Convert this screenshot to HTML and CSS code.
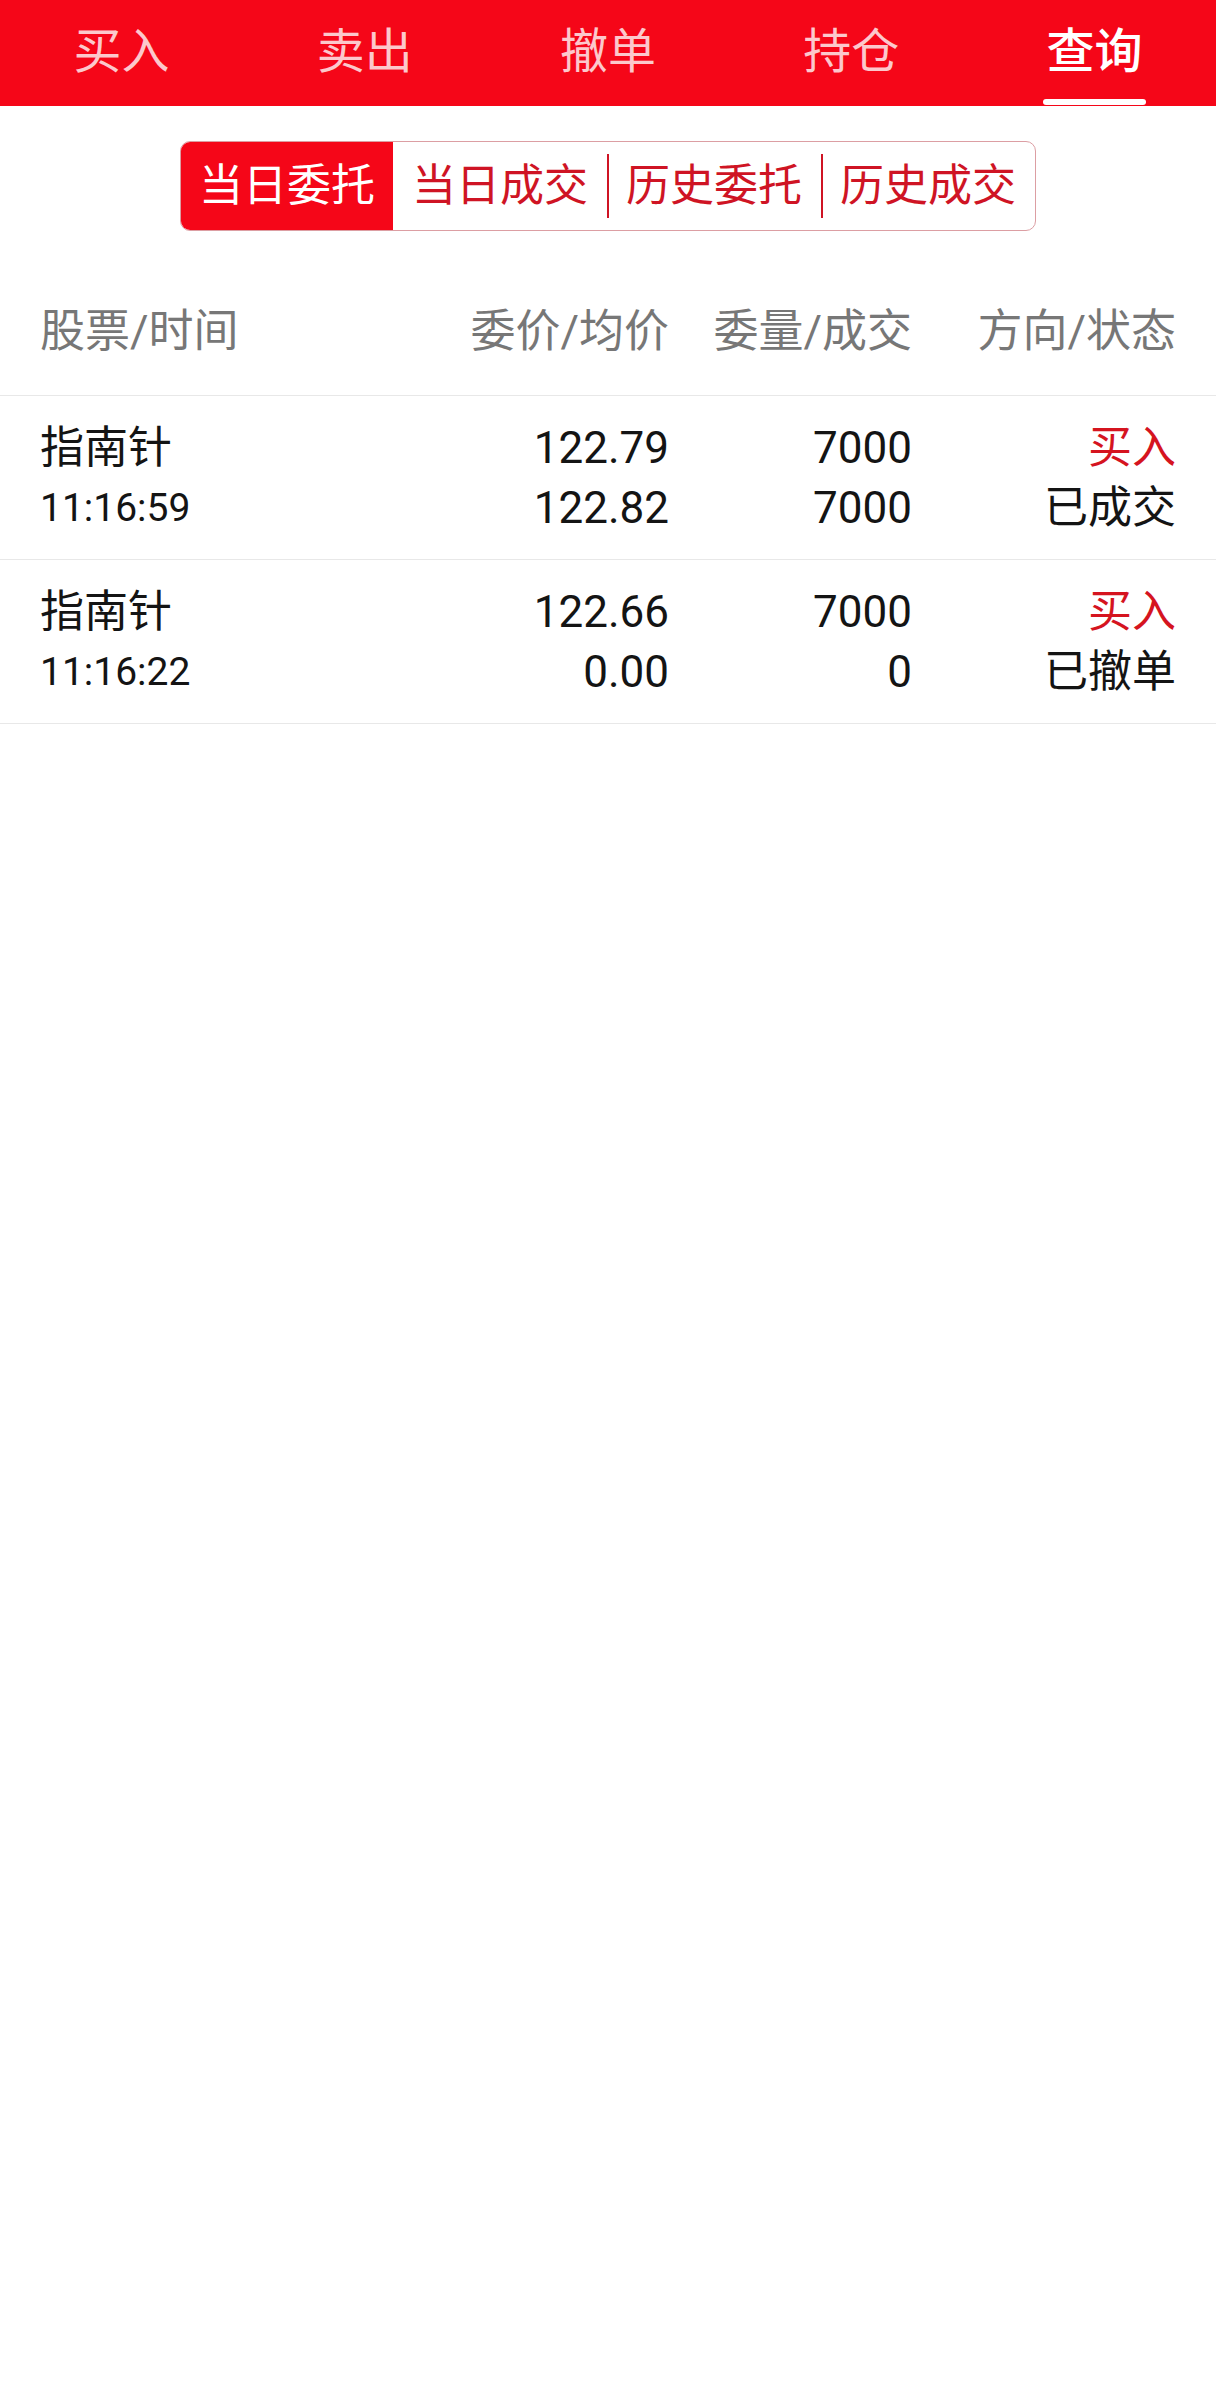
FILE: index.html
```html
<!DOCTYPE html>
<html>
<head>
    <title>查询 – 当日委托</title>
    <link rel="stylesheet" href="styles.css">
</head>
<body>
    <div class="tabbar">
        <div class="tab">买入</div>
        <div class="tab">卖出</div>
        <div class="tab">撤单</div>
        <div class="tab">持仓</div>
        <div class="tab active">查询</div>
    </div>

    <div class="segwrap">
        <div class="seg">
            <div class="seg-item on">当日委托</div>
            <div class="seg-item">当日成交</div>
            <div class="seg-item line">历史委托</div>
            <div class="seg-item line">历史成交</div>
        </div>
    </div>

    <div class="thead">
        <div>股票/时间</div>
        <div class="r">委价/均价</div>
        <div class="r">委量/成交</div>
        <div class="r">方向/状态</div>
    </div>

    <div class="row">
        <div><div>指南针</div><div class="time">11:16:59</div></div>
        <div class="r"><div>122.79</div><div>122.82</div></div>
        <div class="r"><div>7000</div><div>7000</div></div>
        <div class="r"><div class="buy">买入</div><div>已成交</div></div>
    </div>
    <div class="row">
        <div><div>指南针</div><div class="time">11:16:22</div></div>
        <div class="r"><div>122.66</div><div>0.00</div></div>
        <div class="r"><div>7000</div><div>0</div></div>
        <div class="r"><div class="buy">买入</div><div>已撤单</div></div>
    </div>
</body>
</html>
```

FILE: styles.css
```css
body { margin: 0; background: #fff; font-family: Roboto, "Noto Sans CJK SC", sans-serif; color: #141414; }

.tabbar { display: flex; height: 106px; background: #f50618; }
.tab {
    flex: 1;
    position: relative;
    text-align: center;
    font-size: 48px;
    line-height: 103px;
    color: rgba(255,255,255,0.78);
}
.tab.active { color: #fff; font-weight: 500; }
.tab.active::after {
    content: "";
    position: absolute;
    left: 50%;
    bottom: 1px;
    width: 103px;
    height: 6px;
    margin-left: -51px;
    border-radius: 3px;
    background: #fff;
}

.segwrap { display: flex; justify-content: center; padding-top: 35px; }
.seg {
    display: flex;
    border: 1.5px solid #dc9ea3;
    border-radius: 10px;
    overflow: hidden;
}
.seg-item {
    width: 214px;
    height: 88px;
    line-height: 88px;
    text-align: center;
    font-size: 44px;
    color: #cf1424;
    position: relative;
}
.seg-item.on { background: #f50618; color: #fff; width: 212px; }
.seg-item.line::before {
    content: "";
    position: absolute;
    left: 0;
    top: 12px;
    bottom: 12px;
    width: 2px;
    background: #cf1424;
}

.thead, .row {
    display: grid;
    grid-template-columns: 1fr 250px 243px 264px;
    padding: 0 40px;
    border-bottom: 1.5px solid #e8e8e8;
}
.thead { height: 136px; align-items: center; font-size: 45px; color: #777; padding-top: 28px; }
.row { height: 163px; align-content: center; font-size: 44px; line-height: 60px; }
.r { text-align: right; }
.time { font-size: 39px; }
.buy { color: #d5141f; }
```
